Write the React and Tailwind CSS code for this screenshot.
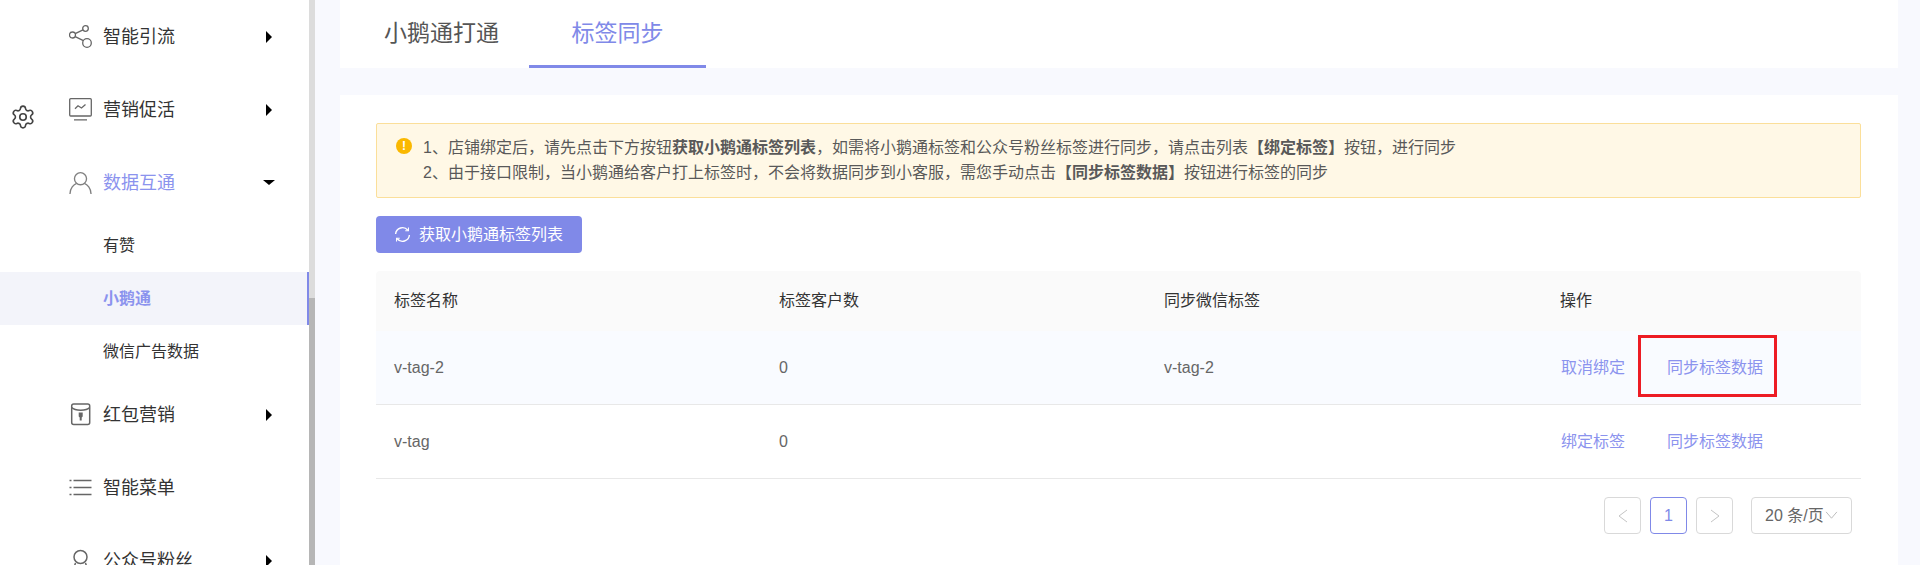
import React from "react";
import { Settings } from "lucide-react";

const ICON = "w-[23px] h-[23px] text-[#666] shrink-0";

const Share = () => (
  <svg viewBox="0 0 23 23" className={ICON} fill="none" stroke="currentColor" strokeWidth="1.300">
    <circle cx="3.500" cy="10" r="3" /><circle cx="16.500" cy="3.500" r="2.800" /><circle cx="18" cy="18" r="4.300" />
    <path d="M6.200 8.700 14 4.800M6.200 11.600 14.400 15.600" />
  </svg>
);
const Monitor = () => (
  <svg viewBox="0 0 23 23" className={ICON} fill="none" stroke="currentColor" strokeWidth="1.300">
    <path d="M.7 17V1.700a1 1 0 0 1 1-1h19.600a1 1 0 0 1 1 1V17a1 1 0 0 1-1 1H1.700a1 1 0 0 1-1-1z" />
    <path d="M5 21.800h13M6 10.800l3-3 3.500 2.200 4-3.500" />
  </svg>
);
const User = () => (
  <svg viewBox="0 0 24 24" className="w-[23px] h-[24px] text-[#808080] shrink-0" fill="none" stroke="currentColor" strokeWidth="1.400">
    <circle cx="12" cy="7.500" r="6.300" /><path d="M1 23.500c0-6 4-10 7-11M23 23.500c0-6-4-10-7-11" />
  </svg>
);
const Packet = () => (
  <svg viewBox="0 0 23 23" className={ICON} fill="none" stroke="currentColor" strokeWidth="1.500">
    <rect x="2.700" y="1" width="18" height="20.500" rx="2" />
    <path d="M2.700 4.500C6 8 17.500 8 20.700 4.500" />
    <path d="M9.700 9.500h4v4l-1 1v3h-2v-3l-1-1z" fill="currentColor" stroke="none" />
  </svg>
);
const ListIcon = () => (
  <svg viewBox="0 0 23 23" className={ICON} fill="none" stroke="currentColor" strokeWidth="1.600">
    <path d="M4.500 4.500h18M4.500 11.500h18M4.500 18.500h18M.500 4.500h2M.500 11.500h2M.500 18.500h2" />
  </svg>
);
const Fans = () => (
  <svg viewBox="0 0 23 23" className={ICON} fill="none" stroke="currentColor" strokeWidth="1.500">
    <circle cx="11.500" cy="8" r="6.500" /><path d="M6.500 14l-2 6h14l-2-6" />
  </svg>
);

const CaretRight = () => <span className="w-0 h-0 border-y-[6px] border-y-transparent border-l-[6px] border-l-black" />;
const CaretDown = () => <span className="w-0 h-0 border-x-[6px] border-x-transparent border-t-[5px] border-t-black" />;

function MenuItem({ icon, label, active, open, noCaret }) {
  return (
    <div className="h-[73px] flex items-center shrink-0 pl-[69px]">
      <div className="w-[34px] flex">{icon}</div>
      <span className={`text-[18px] pt-[1px] ${active ? "text-[#8b93ee]" : "text-[#333]"}`}>{label}</span>
      {!noCaret && (
        <span className={`ml-auto flex ${open ? "mr-[34px]" : "mr-[37px]"}`}>{open ? <CaretDown /> : <CaretRight />}</span>
      )}
    </div>
  );
}

function SubItem({ label, active }) {
  return (
    <div className={`h-[53px] shrink-0 flex items-center pl-[103px] text-[16px] relative ${active ? "bg-[#f3f4fa] text-[#8b93ee] font-semibold" : "text-[#333]"}`}>
      {label}
      {active && <span className="absolute right-0 top-0 bottom-0 w-[2px] bg-[#8089e8]" />}
    </div>
  );
}

function Sidebar() {
  return (
    <aside className="w-[315px] h-full shrink-0 flex bg-white relative overflow-hidden">
      <span className="absolute left-[10px] top-[104px] text-[#444]"><Settings size={26} strokeWidth={1.5} /></span>
      <nav className="w-[309px] flex flex-col">
        <MenuItem icon={<Share />} label="智能引流" />
        <MenuItem icon={<Monitor />} label="营销促活" />
        <MenuItem icon={<User />} label="数据互通" active open />
        <SubItem label="有赞" />
        <SubItem label="小鹅通" active />
        <SubItem label="微信广告数据" />
        <MenuItem icon={<Packet />} label="红包营销" />
        <MenuItem icon={<ListIcon />} label="智能菜单" noCaret />
        <MenuItem icon={<Fans />} label="公众号粉丝" />
      </nav>
      <div className="w-[6px] h-full bg-[#dcdcdc] flex flex-col pt-[298px]">
        <div className="flex-1 bg-[#b6b6b6]" />
      </div>
    </aside>
  );
}

function Tabs() {
  return (
    <div className="h-[68px] bg-white flex shrink-0">
      <div className="w-[189px] pl-[44px] flex items-start pt-[16px] text-[23px] text-[#555]">小鹅通打通</div>
      <div className="w-[177px] flex justify-center pt-[16px] text-[23px] text-[#8089e8] border-b-[3px] border-[#8089e8]">标签同步</div>
    </div>
  );
}

function Alert() {
  return (
    <div className="h-[75px] border border-[#fbdf9a] bg-[#fff8e6] rounded-[2px] flex pl-[19px] pt-[11px] text-[16px] leading-[25px] text-[#595959]">
      <span className="w-[16px] h-[16px] mt-[3px] rounded-full bg-[#fab800] text-white text-[12px] font-bold leading-[16px] text-center shrink-0">!</span>
      <div className="ml-[11px]">
        <div>1、店铺绑定后，请先点击下方按钮<b className="font-semibold">获取小鹅通标签列表</b>，如需将小鹅通标签和公众号粉丝标签进行同步，请点击列表<b className="font-semibold">【绑定标签】</b>按钮，进行同步</div>
        <div>2、由于接口限制，当小鹅通给客户打上标签时，不会将数据同步到小客服，需您手动点击<b className="font-semibold">【同步标签数据】</b>按钮进行标签的同步</div>
      </div>
    </div>
  );
}

function Refresh() {
  return (
    <svg viewBox="0 0 16 16" className="w-[17px] h-[17px]" fill="none" stroke="white" strokeWidth="1.300">
      <path d="M1.500 7.500A6.500 6.500 0 0 1 13 4M14.500 8.500A6.500 6.500 0 0 1 3 12" />
      <path d="M13.600 1.500v3h-3M2.400 14.500v-3h3" strokeWidth="1" />
    </svg>
  );
}

const COLS = "grid grid-cols-[385px_385px_396px_1fr] items-center";

function Row({ name, count, tag, action, hover, marked }) {
  return (
    <div className={`${COLS} relative h-[74px] border-b border-[#e8e8e8] text-[16px] text-[#666] ${hover ? "bg-[#f9fbff]" : "bg-white"}`}>
      <div className="pl-[18px]">{name}</div>
      <div className="pl-[18px]">{count}</div>
      <div className="pl-[18px]">{tag}</div>
      <div className="pl-[19px] flex gap-[42px] text-[#8b93ee]">
        <span>{action}</span>
        <span>同步标签数据</span>
      </div>
      {marked && <span className="absolute left-[1262px] top-[4px] w-[139px] h-[62px] border-[3px] border-[#ed1c24]" />}
    </div>
  );
}

function Chevron({ dir }) {
  return (
    <svg viewBox="0 0 10 14" className="w-[10px] h-[14px]" fill="none" stroke="#c4c4c4" strokeWidth="1">
      <path d={dir === "l" ? "M9 1 1 7l8 6" : "M1 1l8 6-8 6"} />
    </svg>
  );
}

function Pager() {
  const box = "w-[37px] h-[37px] rounded-[4px] border flex items-center justify-center";
  return (
    <div className="flex justify-end pr-[9px] pt-[18px] text-[16px]">
      <div className={`${box} border-[#d9d9d9]`}><Chevron dir="l" /></div>
      <div className={`${box} border-[#8089e8] text-[#8089e8] ml-[9px]`}>1</div>
      <div className={`${box} border-[#d9d9d9] ml-[9px]`}><Chevron dir="r" /></div>
      <div className="w-[101px] h-[37px] ml-[18px] rounded-[4px] border border-[#d9d9d9] flex items-center pl-[13px] text-[#666]">
        <span className="whitespace-nowrap">20 条/页</span>
        <svg viewBox="0 0 14 10" className="w-[13px] h-[9px] ml-[1px]" fill="none" stroke="#b5b5b5" strokeWidth="1"><path d="M1 1l6 7 6-7" /></svg>
      </div>
    </div>
  );
}

export default function App() {
  return (
    <div className="w-[1920px] h-[565px] flex overflow-hidden bg-[#f8f9fe] font-['Liberation_Sans','Noto_Sans_CJK_SC',sans-serif]">
      <Sidebar />
      <main className="flex-1 flex flex-col pl-[25px] pr-[22px]">
        <Tabs />
        <section className="mt-[27px] flex-1 bg-white pl-[36px] pr-[37px] pt-[28px]">
          <Alert />
          <button className="mt-[18px] w-[206px] h-[37px] rounded-[4px] bg-[#8089e8] text-white text-[16px] flex items-center pl-[18px] gap-[8px]">
            <Refresh />获取小鹅通标签列表
          </button>
          <div className="mt-[18px]">
            <div className={`${COLS} h-[60px] bg-[#fafafa] rounded-t-[4px] text-[16px] text-[#333]`}>
              <div className="pl-[18px]">标签名称</div>
              <div className="pl-[18px]">标签客户数</div>
              <div className="pl-[18px]">同步微信标签</div>
              <div className="pl-[18px]">操作</div>
            </div>
            <Row name="v-tag-2" count="0" tag="v-tag-2" action="取消绑定" hover marked />
            <Row name="v-tag" count="0" tag="" action="绑定标签" />
          </div>
          <Pager />
        </section>
      </main>
    </div>
  );
}
